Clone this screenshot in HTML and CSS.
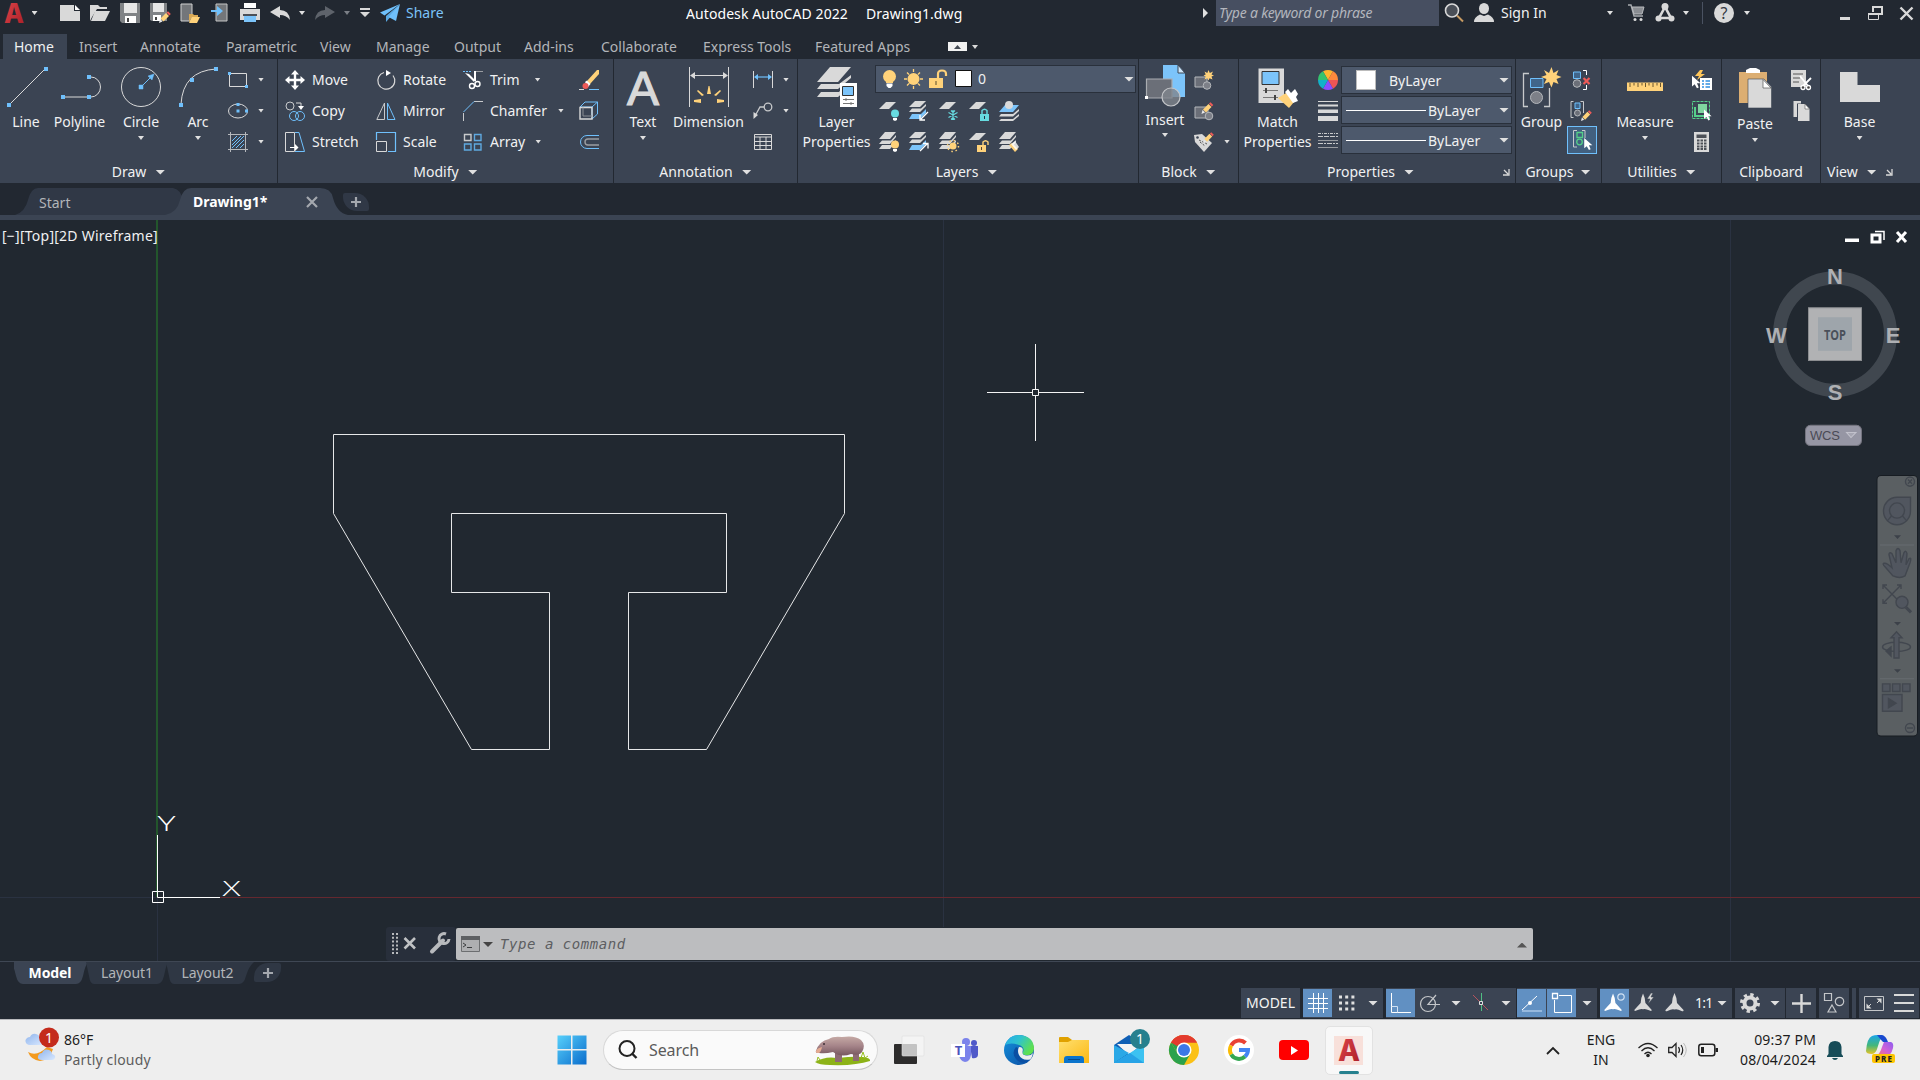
FILE: index.html
```html
<!DOCTYPE html>
<html lang="en">
<head>
<meta charset="utf-8">
<title>Autodesk AutoCAD 2022 - Drawing1.dwg</title>
<link rel="stylesheet" href="styles.css">
</head>
<body>
<svg class="defs" width="0" height="0">
  <defs>
    <symbol id="sheet" viewBox="0 0 20 20"><path d="M7 1H17L10 8H0Z" fill="#d9d9d9"/></symbol>
    <symbol id="stack" viewBox="0 0 20 20"><path d="M6 0H17L11 7H0Z" fill="#d9d9d9"/><path d="M3 8.500H12L17 3V5L11 12H0Z" fill="#d9d9d9"/><path d="M3 13H12L17 8V10L11 17H0Z" fill="#d9d9d9"/></symbol>
    <symbol id="stackb" viewBox="0 0 20 20"><path d="M6 0H17L11 6H0Z" fill="#d9d9d9"/><path d="M3 7.500H12L17 3V5L11 11H0Z" fill="#d9d9d9"/><path d="M3 13H12L17 8V12L11 18H0Z" fill="#7cc4fa"/></symbol>
    <symbol id="pencil" viewBox="0 0 12 12"><path d="M0 12L1 8L3.500 10.500Z" fill="#e8e8e8"/><path d="M1.500 7.500L7 2L10 5L4.500 10.500Z" fill="#ffd27a"/><path d="M7.500 1.500L9 .3L11.800 3L10.300 4.500Z" fill="#ee5b58"/></symbol>
    <symbol id="pointer" viewBox="0 0 10 14"><path d="M0 0V12L3 9.500L5.500 14L7.500 13L5.500 8.500H9.500Z" fill="#fff"/></symbol>
    <symbol id="annot" viewBox="0 0 20 20"><path d="M9.500 0Q12 5 12 10L18.500 17Q19 19 16.500 18Q12 15.500 9.500 16.500Q7 15.500 2.500 18Q0 19 .5 17L7 10Q7 5 9.500 0Z" fill="currentColor"/></symbol>
    <linearGradient id="win" x1="0" y1="0" x2="1" y2="1"><stop offset="0" stop-color="#57d0fb"/><stop offset="1" stop-color="#0a6ccc"/></linearGradient>
    <linearGradient id="red" x1="0" y1="0" x2="1" y2="1"><stop offset="0" stop-color="#e2474b"/><stop offset="1" stop-color="#a81d26"/></linearGradient>
    <linearGradient id="hippo" x1="0" y1="0" x2="0" y2="1"><stop offset="0" stop-color="#c6aaa5"/><stop offset=".5" stop-color="#a58489"/><stop offset="1" stop-color="#76575f"/></linearGradient>
    <linearGradient id="cloud" x1="0" y1="0" x2="1" y2="1"><stop offset="0" stop-color="#8fb4ec"/><stop offset="1" stop-color="#d8e8ff"/></linearGradient>
    <linearGradient id="edge1" x1="0" y1="0" x2="1" y2=".5"><stop offset="0" stop-color="#25a9ec"/><stop offset=".5" stop-color="#2fc3cd"/><stop offset="1" stop-color="#5fe050"/></linearGradient>
    <linearGradient id="edge2" x1="0" y1="0" x2="1" y2="1"><stop offset="0" stop-color="#1492dd"/><stop offset="1" stop-color="#0b4aa0"/></linearGradient>
    <linearGradient id="folder" x1="0" y1="0" x2="1" y2="1"><stop offset="0" stop-color="#ffe070"/><stop offset="1" stop-color="#fbb812"/></linearGradient>
    <linearGradient id="cop1" x1="0" y1="0" x2="0" y2="1"><stop offset="0" stop-color="#1aa5ea"/><stop offset=".55" stop-color="#43b77a"/><stop offset="1" stop-color="#e6c428"/></linearGradient>
    <linearGradient id="cop2" x1="1" y1="0" x2="0" y2="1"><stop offset="0" stop-color="#8c5cf0"/><stop offset=".5" stop-color="#d061d8"/><stop offset="1" stop-color="#fb7a6a"/></linearGradient>
  </defs>
</svg>

<header class="titlebar">
  <div class="qat">
    <svg class="logo" width="28" height="26" viewBox="0 0 28 26"><text x="4" y="22.500" font-family="Inter" font-weight="800" font-size="27" textLength="20" lengthAdjust="spacingAndGlyphs" fill="url(#red)">A</text></svg>
    <span class="cell first"><i class="dn"></i></span>
    <span class="cell"><svg width="20" height="20"><path d="M0 2H14V8H20V18H0Z" fill="#d9d9d9"/><path d="M15 2V7H20Z" fill="#fff"/></svg></span>
    <span class="cell"><svg width="20" height="20"><path d="M0 18V2H8L10 4H17V6H7L2 14Z" fill="#d9d9d9"/><path d="M5 8H20L15 18H1Z" fill="#d9d9d9"/></svg></span>
    <span class="cell"><svg width="20" height="20"><path d="M0 0H20V20H2L0 18Z" fill="#808386"/><path d="M4 0H17V10H4Z" fill="#e6e6e6"/><path d="M5 13H16V20H5Z" fill="#fff"/><path d="M7 15H9V19H7Z" fill="#444"/></svg></span>
    <span class="cell"><svg width="20" height="20"><path d="M0 0H17V18H2L0 17Z" fill="#808386"/><path d="M3 0H14V9H3Z" fill="#e6e6e6"/><path d="M3 12H11V18H3Z" fill="#fff"/><path d="M5 14H7V17H5Z" fill="#444"/><use href="#pencil" x="9" y="8" width="12" height="12"/></svg></span>
    <span class="cell"><svg width="20" height="20"><path d="M1 1H12V18H1Z" fill="#73767a" stroke="#d0d0d0"/><path d="M9 11H13L14 12H18V14H12L9 19Z" fill="#d9a955"/><path d="M12 14H20L17 20H9Z" fill="#ffd27a"/></svg></span>
    <span class="cell"><svg width="20" height="20"><path d="M6 1H17V18H6Z" fill="#73767a" stroke="#c4c4c4"/><path d="M1 7H7V3L13 8L7 13V9H1Z" fill="#6fc0fc"/></svg></span>
    <span class="cell"><svg width="20" height="20"><path d="M4 0H16V5H4Z" fill="#fff"/><path d="M0 6H20V17H0Z" fill="#d9d9d9"/><path d="M3 11H17V13H3Z" fill="#4c5057"/><path d="M4 13H16V19H4Z" fill="#7cc4fa"/></svg></span>
    <span class="cell"><svg width="20" height="20"><path d="M0 9L10 3V7Q19 7 20 17Q16 12 10 12V15Z" fill="#d9d9d9"/></svg></span>
    <span class="cell half"><i class="dn"></i></span>
    <span class="cell"><svg width="20" height="20"><path d="M20 9L10 3V7Q1 7 0 17Q4 12 10 12V15Z" fill="#5e636b"/></svg></span>
    <span class="cell half"><i class="dn dim"></i></span>
    <span class="cell slim"><svg width="10" height="10"><path d="M0 0H10V2H0ZM0 4H10L5 9Z" fill="#d9d9d9"/></svg></span>
    <span class="cell"><svg width="20" height="20"><path d="M20 1L0 9.500L4.500 12.500Z" fill="#6fc0fc"/><path d="M20 1L6 13V19L9.500 15Z" fill="#5aa9e4"/><path d="M20 1L8.500 14L16 18Z" fill="#6fc0fc"/></svg></span>
    <span class="share">Share</span>
  </div>
  <div class="apptitle"><span>Autodesk AutoCAD 2022</span><span>Drawing1.dwg</span></div>
  <div class="search"><svg width="5" height="10"><path d="M0 0L5 5L0 10Z" fill="#e0e0e0"/></svg><span class="kw">Type a keyword or phrase</span></div>
  <div class="account">
    <svg width="20" height="20"><circle cx="7" cy="7.500" r="6.500" fill="#4a4f57" stroke="#d9d9d9" stroke-width="1.600"/><path d="M12 12.500L18 18.500" stroke="#c79a62" stroke-width="2"/></svg>
    <svg class="user" width="20" height="20"><ellipse cx="10" cy="5.500" rx="5" ry="5.500" fill="#d9d9d9"/><path d="M0 19Q0 14 6 11.500L10 13L14 11.500Q20 14 20 19Z" fill="#d9d9d9"/></svg>
    <span class="signin">Sign In</span>
    <i class="dn a1"></i>
    <svg class="cart" width="17" height="18"><path d="M0 1H3L6 12H15" fill="none" stroke="#a9acb0" stroke-width="1.400"/><path d="M4 3H16L14 10H6Z" fill="#8a8d92" stroke="#b9bbbe"/><circle cx="7" cy="15.500" r="1.500" fill="#d9d9d9"/><circle cx="13" cy="15.500" r="1.500" fill="#d9d9d9"/></svg>
    <svg class="tri" width="20" height="20"><path d="M10 4L4 15H16Z" fill="none" stroke="#d9d9d9" stroke-width="2.600"/><circle cx="10" cy="3.500" r="3.500" fill="#d9d9d9"/><circle cx="3.500" cy="15.500" r="3" fill="#d9d9d9"/><circle cx="16.500" cy="15.500" r="3" fill="#d9d9d9"/></svg>
    <i class="dn a2"></i>
    <i class="vsep"></i>
    <span class="help">?</span>
    <i class="dn a3"></i>
  </div>
  <div class="winbtns">
    <svg width="80" height="20"><path d="M0 11H10V14H0Z" fill="#d9d9d9"/><path d="M33 6V1H42V8H38" fill="none" stroke="#d9d9d9" stroke-width="2"/><path d="M28.500 7.500H38.500V13.500H28.500Z" fill="#222831" stroke="#d9d9d9"/><path d="M28 7H39V9H28Z" fill="#d9d9d9"/><path d="M60.500 1.500L72.500 13.500M72.500 1.500L60.500 13.500" stroke="#d9d9d9" stroke-width="2.400"/></svg>
  </div>
</header>

<nav class="tabs">
  <span class="tab on">Home</span><span class="tab t2">Insert</span><span class="tab t3">Annotate</span><span class="tab t4">Parametric</span><span class="tab t5">View</span><span class="tab t6">Manage</span><span class="tab t7">Output</span><span class="tab t8">Add-ins</span><span class="tab t9">Collaborate</span><span class="tab t10">Express Tools</span><span class="tab t11">Featured Apps</span>
  <svg width="30" height="10"><path d="M0 0H19V9H0Z" fill="#f2f2f2"/><path d="M6 7L9.500 3L13 7Z" fill="#444a54"/><path d="M24 3H30L27 7Z" fill="#d9d9d9"/></svg>
</nav>

<main class="ribbon">
  <section class="panel">
    <div class="body draw">
      <div class="big"><svg width="40" height="40"><path d="M2 38L38 2" stroke="#d9d9d9"/><path d="M0 36h4v4h-4zM37 0h4v4h-4z" fill="#6fc0fc"/></svg><span>Line</span></div>
      <div class="big"><svg width="40" height="40"><path d="M2 30H30A9.500 10 0 0 0 30 10" fill="none" stroke="#d9d9d9"/><path d="M0 28h4v4h-4zM26 28h4v4h-4zM26 8h4v4h-4z" fill="#6fc0fc"/></svg><span>Polyline</span></div>
      <div class="big"><svg width="40" height="40"><circle cx="20" cy="20" r="19.500" fill="none" stroke="#d9d9d9"/><path d="M20 20L32 8" stroke="#6fc0fc"/><path d="M18 18h4v4h-4zM33 7L31 13L27 9Z" fill="#6fc0fc" stroke="#6fc0fc" stroke-width=".5"/></svg><span>Circle</span><i class="dn"></i></div>
      <div class="big"><svg width="40" height="40"><path d="M3 37Q5 4 38 2" fill="none" stroke="#d9d9d9"/><path d="M1 36h4v4h-4zM12 11h4v4h-4zM36 0h4v4h-4z" fill="#6fc0fc"/></svg><span>Arc</span><i class="dn"></i></div>
      <div class="col">
        <div><svg width="20" height="20"><path d="M1.500 3.500H18.500V16.500H1.500Z" fill="none" stroke="#d9d9d9"/><path d="M0 2h3v3h-3zM17 15h3v3h-3z" fill="#6fc0fc"/></svg><i class="dn"></i></div>
        <div><svg width="20" height="20"><ellipse cx="10" cy="10" rx="9.500" ry="7" fill="none" stroke="#d9d9d9"/><path d="M8.500 8.500h3v3h-3zM8.500 2h3v3h-3zM17 8.500h3v3h-3z" fill="#6fc0fc"/></svg><i class="dn"></i></div>
        <div><svg width="20" height="20"><path d="M2.500 0V20M17.500 0V20M0 2.500H20M0 17.500H20" stroke="#b5b8bc"/><path d="M4 9L9 4M4 13L13 4M4 16L16 4M8 16L16 8M12 16L16 12" stroke="#6fc0fc"/></svg><i class="dn"></i></div>
      </div>
    </div>
    <div class="ptitle">Draw<i class="dnb"></i></div>
  </section>

  <section class="panel">
    <div class="body modify">
      <div class="col">
        <div><svg width="20" height="20"><path d="M10 0L14 4.500H11.200V8.800H15.500V6L20 10L15.500 14V11.200H11.200V15.500H14L10 20L6 15.500H8.800V11.200H4.500V14L0 10L4.500 6V8.800H8.800V4.500H6Z" fill="#fff"/></svg>Move</div>
        <div><svg width="20" height="20"><circle cx="5" cy="5" r="4" fill="none" stroke="#c8cacc"/><path d="M11 2H16V6" fill="none" stroke="#d9d9d9"/><path d="M13 5H19L16 9Z" fill="#fff"/><circle cx="9" cy="15" r="4.500" fill="none" stroke="#6fc0fc"/><circle cx="15" cy="15" r="4.500" fill="none" stroke="#6fc0fc"/></svg>Copy</div>
        <div><svg width="20" height="20"><path d="M.5.500H9.500V19.500H.5Z" fill="none" stroke="#d9d9d9"/><path d="M10 .5H14L19.500 19.500H10" fill="none" stroke="#6fc0fc"/><path d="M5 15.500H12" stroke="#fff"/><path d="M10 12L13.500 15.500L10 19Z" fill="#fff"/></svg>Stretch</div>
      </div>
      <div class="col">
        <div><svg width="20" height="20"><path d="M8 2.500A8.500 8.500 0 1 0 17 5.500" fill="none" stroke="#d9d9d9" stroke-width="1.200"/><path d="M10 0L15 3L10 6Z" fill="#fff"/></svg>Rotate</div>
        <div><svg width="20" height="20"><path d="M8.500 2V18.500H.8Z" fill="none" stroke="#c8cacc"/><path d="M11.500 2V18.500H19Z" fill="none" stroke="#6fc0fc"/></svg>Mirror</div>
        <div><svg width="20" height="20"><path d="M.5 8V.5H19.500V19.500H12" fill="none" stroke="#6fc0fc" stroke-width="1.200"/><path d="M.5 9.500H10.500V19.500H.5Z" fill="none" stroke="#d9d9d9"/></svg>Scale</div>
      </div>
      <div class="col">
        <div><svg width="20" height="20"><path d="M0 1.500H9" stroke="#6fc0fc" stroke-dasharray="2 1"/><path d="M12 1.500H20" stroke="#9a9da2"/><path d="M2 3L11 12L12 10L6 4ZM11 1V11L13 11V1Z" fill="#fff"/><circle cx="9" cy="16" r="2.500" fill="none" stroke="#fff" stroke-width="1.400"/><circle cx="14.500" cy="14" r="2.500" fill="none" stroke="#fff" stroke-width="1.400"/></svg>Trim<i class="dn m1"></i></div>
        <div><svg width="20" height="20"><path d="M.5 20V12M11 .5H20" stroke="#c8cacc"/><path d="M.5 11L11 .5" stroke="#6fc0fc"/></svg>Chamfer<i class="dn m2"></i></div>
        <div><svg width="20" height="20"><path d="M1.500 2.500H8V8.500H1.500Z" fill="none" stroke="#c8cacc" stroke-width="1.400"/><path d="M11.500 2.500H18V8.500H11.500ZM1.500 12H8V18H1.500ZM11.500 12H18V18H11.500Z" fill="none" stroke="#5fa9e0" stroke-width="1.400"/></svg>Array<i class="dn m3"></i></div>
      </div>
      <div class="col">
        <div><svg width="20" height="20"><path d="M8 11L18 0H20V4L11 14Z" fill="#ffd27a"/><path d="M6 12L8 10.500L11.500 14L9 17Z" fill="#fff"/><circle cx="6.500" cy="16" r="3" fill="#ee5b58"/><path d="M0 19.500H5" stroke="#d9d9d9"/><path d="M10 19.500H20" stroke="#6fc0fc"/></svg></div>
        <div><svg width="20" height="20"><path d="M1 6L6 1H18.500L13 6ZM18.500 1V13L13 18V6" fill="none" stroke="#6fc0fc"/><path d="M1 6.500H13V18H1Z" fill="none" stroke="#d9d9d9" stroke-width="1.400"/><path d="M4 6.500V15H13" fill="none" stroke="#8b8e94"/></svg></div>
        <div><svg width="20" height="20"><path d="M20 3.500H8A6.500 6.500 0 0 0 8 16.500H20" fill="none" stroke="#6fc0fc"/><path d="M20 7H9A3 3 0 0 0 9 13H20" fill="none" stroke="#9a9da2" stroke-width="1.400"/></svg></div>
      </div>
    </div>
    <div class="ptitle">Modify<i class="dnb"></i></div>
  </section>

  <section class="panel">
    <div class="body annotation">
      <div class="big"><svg width="40" height="40"><text x="4" y="37.500" font-family="Liberation Sans" font-size="48" stroke="#d9d9d9" stroke-width="1.200" textLength="32" lengthAdjust="spacingAndGlyphs" fill="#d9d9d9">A</text></svg><span>Text</span><i class="dn"></i></div>
      <div class="big"><svg width="40" height="40"><path d="M.5 0V40M39.500 0V40M2 8.500H38" stroke="#d9d9d9"/><path d="M1 8.500L6 5V12ZM39 8.500L34 5V12Z" fill="#d9d9d9"/><path d="M18 27L19.500 19H20.500L22 27ZM13 29L8 24L9 23L15 28ZM27 29L32 24L31 23L25 28ZM12 36L5 35V33L12 32ZM28 36L35 35V33L28 32Z" fill="#ffd27a"/></svg><span>Dimension</span></div>
      <div class="col">
        <div><svg width="20" height="20"><path d="M.5 1V18M19.500 1V18" stroke="#d9d9d9"/><path d="M2 7H18" stroke="#6fc0fc" stroke-width="1.200"/><path d="M1 7L5 4V10ZM19 7L15 4V10Z" fill="#6fc0fc"/></svg><i class="dn"></i></div>
        <div><svg width="20" height="20"><circle cx="15" cy="6" r="3.800" fill="none" stroke="#c8cacc" stroke-width="1.300"/><path d="M11 6H7L2 15" fill="none" stroke="#c8cacc" stroke-width="1.300"/><path d="M.5 18V11L5 14Z" fill="#d9d9d9"/></svg><i class="dn"></i></div>
        <div><svg width="20" height="20"><path d="M1.500 2.500H18.500V17.500H1.500ZM1.500 5H18.500M1.500 9.500H18.500M1.500 13.500H18.500M7 5V17.500M13 5V17.500" fill="none" stroke="#d9d9d9"/></svg></div>
      </div>
    </div>
    <div class="ptitle">Annotation<i class="dnb"></i></div>
  </section>

  <section class="panel">
    <div class="body layers">
      <div class="big"><svg width="40" height="40"><path d="M13 0H34L21 15H0Z" fill="#d9d9d9"/><path d="M4 17H22L34 8V11L21 22H0ZM4 25H22L28 18V24L21 30H0Z" fill="#d9d9d9"/><path d="M23 16H40V40H23Z" fill="#fff"/><path d="M25.500 19.500H36.500V28.500H25.500Z" fill="#7cc4fa" stroke="#333"/><path d="M26 32.500H37M26 36.500H37M29 31V34M34 35V38" stroke="#777"/></svg><span>Layer<br>Properties</span></div>
      <div class="lstack">
        <div class="combo lcombo">
          <svg width="100" height="26"><circle cx="13.500" cy="10.500" r="6.500" fill="#ffd27a"/><path d="M10 15H17V17H10Z" fill="#ffd27a"/><path d="M10.500 17.500H16.500V20L14.500 22H12.500L10.500 20Z" fill="#fff"/><circle cx="37.500" cy="13" r="6" fill="#ffd27a"/><path d="M37.500 3V6M37.500 20V23M28 13H31M44 13H47M31 6.500L33 8.500M44 6.500L42 8.500M31 19.500L33 17.500M44 19.500L42 17.500" stroke="#ffd27a" stroke-width="1.300"/><path d="M53 12H67V22H53Z" fill="#ffd27a"/><path d="M62 12V8Q62 4.500 66 4.500Q70 4.500 70 8V10" fill="none" stroke="#ffd27a" stroke-width="2.200"/><path d="M60 15V19" stroke="#5b4c2a"/><path d="M79.500 4.500H95.500V20.500H79.500Z" fill="#fff" stroke="#111"/></svg>
          <span>0</span><i class="dnb"></i>
        </div>
        <div class="irow">
          <svg width="20" height="20"><use href="#sheet" width="20" height="20"/><circle cx="16" cy="12.500" r="4" fill="#67dbe0"/><path d="M14 17H18V19L16 20L14 19Z" fill="#fff"/></svg>
          <svg width="20" height="20"><use href="#stackb" width="20" height="20"/><path d="M19 11L12 18M11 14V19H16" stroke="#fff" fill="none" stroke-width="1.300"/></svg>
          <svg width="20" height="20"><use href="#sheet" width="20" height="20"/><path d="M14 9V19M9.500 11.500L18.500 16.500M18.500 11.500L9.500 16.500M12 9.500L14 11.500L16 9.500M12 18.500L14 16.500L16 18.500" fill="none" stroke="#67dbe0" stroke-width="1.200"/></svg>
          <svg width="20" height="20"><use href="#sheet" width="20" height="20"/><path d="M11 13H20V20H11Z" fill="#67dbe0"/><path d="M13 13V9.500Q15.500 7 18 9.500V13" fill="none" stroke="#67dbe0" stroke-width="1.400"/><path d="M15.500 15V18" stroke="#234"/></svg>
          <svg width="20" height="20"><path d="M6 4H20L14 11H0Z" fill="#7cc4fa"/><circle cx="10" cy="4" r="4" fill="#d9d9d9"/><path d="M2 13H14L20 8V10L14 15.500H0ZM2 18H14L20 13V15L14 20H0Z" fill="#d9d9d9"/></svg>
        </div>
        <div class="irow">
          <svg width="20" height="20"><use href="#stack" width="20" height="20"/><circle cx="16" cy="12.500" r="4" fill="#ffd27a"/><path d="M14 17H18V19L16 20L14 19Z" fill="#fff"/></svg>
          <svg width="20" height="20"><use href="#stackb" width="20" height="20"/><path d="M11 19L18 12M14 11.500H19V16.500" stroke="#fff" fill="none" stroke-width="1.300"/></svg>
          <svg width="20" height="20"><use href="#stack" width="20" height="20"/><circle cx="14" cy="14" r="3.500" fill="#ffd27a"/><circle cx="14" cy="14" r="5.500" fill="none" stroke="#ffd27a" stroke-width="1.500" stroke-dasharray="1.500 2.800"/></svg>
          <svg width="20" height="20"><use href="#sheet" width="20" height="20"/><path d="M8 13H17V20H8Z" fill="#ffd27a"/><path d="M14 13V10Q16.500 7.500 19 10V13" fill="none" stroke="#ffd27a" stroke-width="1.400"/><path d="M12.500 15V18" stroke="#543"/></svg>
          <svg width="20" height="20"><use href="#stack" width="20" height="20"/><path d="M10 13L13 11L19 17L16 20Z" fill="#ffd27a"/><path d="M12 12L16 9L20 15L17 18Z" fill="#fff" opacity=".8"/></svg>
        </div>
      </div>
    </div>
    <div class="ptitle lt">Layers<i class="dnb"></i></div>
  </section>

  <section class="panel">
    <div class="body block">
      <div class="big up"><svg width="40" height="42"><path d="M18 0H33L40 8V32H18Z" fill="#7cc4fa"/><path d="M33 0V8H40Z" fill="#cfe7fa" stroke="#3b4453"/><path d="M1.500 14H27V33H1.500Z" fill="#6b6f78" stroke="#a9acb1" stroke-width="1.200"/><circle cx="26" cy="32" r="9" fill="#80848c" fill-opacity=".8" stroke="#c4c6c9" stroke-width="1.200"/><path d="M0 31h3v3h-3z" fill="#fff"/></svg><span>Insert</span><i class="dn"></i></div>
      <div class="col">
        <div><svg width="20" height="20"><path d="M1 7H13V17H1Z" fill="#6b6f78" stroke="#b5b8bc"/><circle cx="13" cy="15.500" r="3.800" fill="#7d8088" stroke="#b5b8bc"/><path d="M14.500 0L15.800 3L19 1.500L17.500 4.500L20 5.500L17.500 6.500L18.500 9.500L15.500 8.200L14.500 10.500L13.300 8.200L10.500 9.500L11.700 6.500L9.500 5.500L11.700 4.500L10.500 1.500L13.300 3Z" fill="#ffd27a"/></svg></div>
        <div><svg width="20" height="20"><path d="M1 6H14V17H1Z" fill="#6b6f78" stroke="#b5b8bc"/><circle cx="15" cy="15" r="3.800" fill="#7d8088" stroke="#b5b8bc"/><use href="#pencil" x="7" y="1" width="13" height="12"/></svg></div>
        <div><svg width="20" height="20"><path d="M0 3L8 2L18 11L10 20L1 10Z" fill="#d9d9d9"/><circle cx="3.500" cy="5.500" r="1.300" fill="#3b4453"/><path d="M6 10L11 14M5 8L13 12" stroke="#555" stroke-dasharray="2 1.500"/><use href="#pencil" x="9" y="0" width="11" height="11"/></svg><i class="dn"></i></div>
      </div>
    </div>
    <div class="ptitle">Block<i class="dnb"></i></div>
  </section>

  <section class="panel">
    <div class="body props">
      <div class="big"><svg width="40" height="42"><path d="M.5 1.500H26V36H.5Z" fill="#d9d9d9"/><path d="M4 4.500H21V17.500H4Z" fill="#7cc4fa" stroke="#333"/><path d="M5 23.500H20M5 30.500H20" stroke="#777"/><path d="M8 21V26M17 28V33" stroke="#444" stroke-width="2"/><path d="M20 31L28 26L36 35L31 41Z" fill="#ffd27a"/><path d="M27 25L30 22L33 26L37 22L40 27L38 30L40 34L35 36Z" fill="#fff"/></svg><span>Match<br>Properties</span></div>
      <div class="col">
        <div><svg width="20" height="20"><g transform="translate(10 10)"><path d="M0 0L-5 -8.660A10 10 0 0 1 5 -8.660Z" fill="#ffb52e"/><path d="M0 0L5 -8.660A10 10 0 0 1 10 0Z" fill="#ff8a3c"/><path d="M0 0H10A10 10 0 0 1 5 8.660Z" fill="#ee5555"/><path d="M0 0L5 8.660A10 10 0 0 1 -5 8.660Z" fill="#8a4dff"/><path d="M0 0L-5 8.660A10 10 0 0 1 -10 0Z" fill="#12b1c9"/><path d="M0 0H-10A10 10 0 0 1 -5 -8.660Z" fill="#35c36e"/></g></svg></div>
        <div><svg width="20" height="20"><path d="M0 0H20V1H0ZM0 3.500H20V5.500H0ZM0 8.500H20V12H0ZM0 15H20V20H0Z" fill="#d9d9d9"/></svg></div>
        <div><svg width="20" height="20"><path d="M0 1.500H20" stroke="#c8cacc" stroke-dasharray="3 1 1 1"/><path d="M0 4.500H20" stroke="#c8cacc" stroke-dasharray="5 1"/><path d="M0 8.500H20M0 15.500H20" stroke="#9a9da2"/><path d="M0 11.500H20" stroke="#c8cacc" stroke-dasharray="5 1 2 1"/></svg></div>
      </div>
      <div class="combos">
        <div class="combo"><i class="swatch"></i><span>ByLayer</span><i class="dnb"></i></div>
        <div class="combo"><i class="ln"></i><span>ByLayer</span><i class="dnb"></i></div>
        <div class="combo"><i class="ln"></i><span>ByLayer</span><i class="dnb"></i></div>
      </div>
    </div>
    <div class="ptitle pt">Properties<i class="dnb"></i><svg class="launch" width="7" height="7"><path d="M1 1L5 5M6 0V6H0" fill="none" stroke="#d9d9d9" stroke-width="1.300"/></svg></div>
  </section>

  <section class="panel">
    <div class="body groups">
      <div class="big"><svg width="40" height="42"><path d="M7 6.500H1.500V39.500H6M22 39.500H27.500V21" fill="none" stroke="#c8cacc" stroke-width="1.300"/><path d="M8.500 11.500H21V20.500H8.500Z" fill="#40658a" stroke="#6fc0fc"/><circle cx="14.500" cy="30.500" r="6" fill="#7d8088" stroke="#b5b8bc"/><path d="M29.500 0L31.500 6L36.500 3L34.500 8L39.500 10L34.500 12L36.500 17L31.500 15L29.500 20.500L27 15L22 17L24.500 12L19 10L24.500 8L22 3L27 6Z" fill="#ffd27a"/></svg><span>Group</span></div>
      <div class="col">
        <div><svg width="20" height="20"><path d="M1.500 2H8.500V8.500H1.500Z" fill="#40658a" stroke="#6fc0fc"/><circle cx="5" cy="13.500" r="3.800" fill="#6b6f78" stroke="#b5b8bc"/><path d="M11 .5H14.500V5M14.500 15V19.500H11" fill="none" stroke="#fff"/><path d="M11.500 8L17.500 14M17.500 8L11.500 14" stroke="#ee5b58" stroke-width="2.200"/></svg></div>
        <div><svg width="20" height="20"><path d="M2 .5H-.5V16.500H2M9 .5H12V12" fill="none" stroke="#c8cacc" transform="translate(-.5 0)"/><path d="M3 2H8V7.500H3Z" fill="#40658a" stroke="#6fc0fc"/><circle cx="5.500" cy="12" r="3" fill="#6b6f78" stroke="#b5b8bc"/><use href="#pencil" x="9" y="9" width="11" height="11"/></svg></div>
        <div class="hl"><svg width="20" height="20"><path d="M4 .5H.5V17H4M9 .5H12V8" fill="none" stroke="#c8cacc"/><path d="M4 2.500H9.500V7.500H4Z" fill="none" stroke="#55d08a" stroke-width="1.300"/><circle cx="6.500" cy="12" r="2.800" fill="none" stroke="#55d08a" stroke-width="1.300"/><use href="#pointer" x="11" y="8" width="9" height="12"/></svg></div>
      </div>
    </div>
    <div class="ptitle gt">Groups<i class="dnb"></i></div>
  </section>

  <section class="panel">
    <div class="body utils">
      <div class="big"><svg width="40" height="40"><path d="M2 15.500H38V24H2Z" fill="#ffd27a"/><path d="M5 16V20M9 16V18.500M13 16V20M17 16V18.500M20.500 16V20M24 16V18.500M28 16V20M32 16V18.500M35.500 16V20" stroke="#6a5730"/></svg><span>Measure</span><i class="dn"></i></div>
      <div class="col">
        <div><svg width="20" height="20"><path d="M8 0L3 6H7L5 10L13 4H9L11 0Z" fill="#ffc65a"/><use href="#pointer" x="0" y="5" width="9" height="14"/><path d="M8 8H20V20H8Z" fill="#fff"/><path d="M10 11H12M13.500 11H18M10 14H12M13.500 14H18M10 17H12M13.500 17H18" stroke="#2f8fe0" stroke-width="1.300"/></svg></div>
        <div><svg width="20" height="20"><path d="M.5 .5H17.500V17.500H.5Z" fill="none" stroke="#55d08a" stroke-dasharray="3 1"/><path d="M6 3H15V12H6Z" fill="#7fd6a0"/><path d="M3 6V15H12" fill="none" stroke="#55d08a" stroke-width="2"/><use href="#pointer" x="12" y="8" width="8" height="12"/></svg></div>
        <div><svg width="20" height="20"><path d="M2 0H17V20H2Z" fill="#d9d9d9"/><path d="M4.500 2.500H14.500V6H4.500Z" fill="#4c5057"/><path d="M5 8.500H15M5 11.500H15M5 14.500H15M5 17H15" stroke="#4c5057" stroke-width="2" stroke-dasharray="2.500 1"/></svg></div>
      </div>
    </div>
    <div class="ptitle">Utilities<i class="dnb"></i></div>
  </section>

  <section class="panel">
    <div class="body clip">
      <div class="big low"><svg width="34" height="41"><path d="M1 5H29V36H1Z" fill="#dcae72"/><path d="M8 6V3L12 1H18L22 3V6Z" fill="#fff"/><path d="M10 12H26L33.500 20V41H10Z" fill="#d9d9d9" stroke="#3b4453" stroke-width=".6"/><path d="M25 12.500V21H33Z" fill="#fff" stroke="#555" stroke-width=".7"/></svg><span>Paste</span><i class="dn"></i></div>
      <div class="col">
        <div><svg width="20" height="20"><path d="M0 0H15V17H0Z" fill="#d9d9d9"/><path d="M2 4H12M2 8H9M2 12H8" stroke="#555"/><path d="M9 6L17 16M20 8L12 16" stroke="#fff" stroke-width="1.800"/><circle cx="12" cy="17.500" r="2" fill="#444" stroke="#fff" stroke-width="1.300"/><circle cx="17.500" cy="17.500" r="2" fill="#444" stroke="#fff" stroke-width="1.300"/></svg></div>
        <div><svg width="20" height="20"><path d="M2.500 0H10V2.500H6V16H2.500Z" fill="#d9d9d9"/><path d="M7 3H14L18.500 8V20H7Z" fill="#d9d9d9"/><path d="M14 3V8H18.500Z" fill="#fff" stroke="#555" stroke-width=".6"/></svg></div>
      </div>
    </div>
    <div class="ptitle">Clipboard</div>
  </section>

  <section class="panel">
    <div class="body view">
      <div class="big"><svg width="40" height="40"><path d="M0 5H17.500V18H40V35H0Z" fill="#d9d9d9"/></svg><span>Base</span><i class="dn"></i></div>
    </div>
    <div class="ptitle vt">View<i class="dnb"></i><svg class="launch" width="7" height="7"><path d="M1 1L5 5M6 0V6H0" fill="none" stroke="#d9d9d9" stroke-width="1.300"/></svg></div>
  </section>
</main>

<div class="doctabs">
  <div class="dtab start">Start</div>
  <div class="dtab current">Drawing1*<svg width="12" height="12"><path d="M1 1L11 11M11 1L1 11" stroke="#a4a8ae" stroke-width="2.200"/></svg></div>
  <div class="dplus"><svg width="10" height="10"><path d="M5 0V10M0 5H10" stroke="#a4a8ae" stroke-width="2.200"/></svg></div>
</div>

<div class="canvas">
  <svg class="drawing" width="1920" height="741" viewBox="0 220 1920 741">
    <path d="M943.500 220V927M1730.500 220V961M157.500 898V961M0 897.500H157" stroke="#2a3241"/>
    <path d="M157 220V897" stroke="#23562c" stroke-width="2"/>
    <path d="M157 897.500H1920" stroke="#65282f"/>
    <path d="M333.500 434.500H844.500V513.500L706.500 749.500H628.500V592.500H726.500V513.500H451.500V592.500H549.500V749.500H471.500L333.500 513.500Z" fill="none" stroke="#e6e7e8"/>
    <path d="M1035.500 344V389M1035.500 396V441M987 392.500H1032M1039 392.500H1084M1032.500 389.500H1038.500V395.500H1032.500Z" fill="none" stroke="#f4f4f4"/>
    <path d="M157.500 835V897.500H220M152.500 891.500H163.500V902.500H152.500Z" fill="none" stroke="#fff"/>
    <g class="ucs"><text x="157.500" y="831" textLength="18" lengthAdjust="spacingAndGlyphs">Y</text><text x="222.500" y="896" textLength="18" lengthAdjust="spacingAndGlyphs">X</text></g>
    <path d="M1845 238.500H1859V242H1845Z" fill="#fff"/>
    <path d="M1875 231.500H1884V240" fill="none" stroke="#fff" stroke-width="1.500"/><path d="M1872 235H1880V242H1872Z" fill="none" stroke="#fff" stroke-width="3"/>
    <path d="M1897 232L1906 242M1906 232L1897 242" stroke="#fff" stroke-width="3"/>
    <g transform="translate(0 -3.080) scale(1 1.014)">
    <circle cx="1835" cy="332.500" r="55.500" fill="none" stroke="#40474f" stroke-width="13"/>
    <g class="compass"><text x="1835" y="283">N</text><text x="1835" y="398">S</text><text x="1776.500" y="341">W</text><text x="1893" y="341">E</text></g>
    <path d="M1808.500 306.500H1861.500V358.500H1808.500Z" fill="#b1b2b4" stroke="#8b8d90"/><path d="M1818 316H1852V349H1818Z" fill="#9ea5ab"/>
    <text class="top" x="1835" y="338" textLength="22" lengthAdjust="spacingAndGlyphs">TOP</text>
    <rect x="1805.500" y="422.500" width="56" height="20" rx="5" fill="#9696a4" stroke="#74747f"/>
    <text class="wcs" x="1810" y="437" textLength="30" lengthAdjust="spacing">WCS</text><path d="M1846.500 429.500H1856L1851 434.500Z" fill="#a6a6b2" stroke="#c2c2cc"/>
    <rect x="1877" y="472" width="40.500" height="257" rx="4" fill="#5a5f62" stroke="#171c22"/>
    <path d="M1880 540.500H1914M1880 672.500H1914" stroke="#676c70"/>
    <g fill="none" stroke="#42474f" stroke-width="1.400">
      <circle cx="1910" cy="478" r="4.500"/><path d="M1908 476L1912 480M1912 476L1908 480"/>
      <path d="M1897 493.500H1910.500V507A13.500 13.500 0 1 1 1897 493.500Z" fill="#51565f"/><circle cx="1897" cy="506.500" r="7.500"/><path d="M1891.500 512L1888 516M1902.500 512L1906 516"/>
      <path d="M1893 571L1885 562Q1882 559 1884 558.500Q1887 558 1892 563L1889 550Q1889 547 1892 549L1896 558V546Q1898 542 1900 546L1901 558L1904 548Q1906 545 1907 549L1906 560L1909 554Q1912 552 1910 558L1905 571Q1900 574 1893 571Z" fill="#51565f"/>
      <path d="M1883 580L1901 598M1901 580L1883 598M1883 584V580H1887M1897 580H1901V584M1883 594V598H1887"/><circle cx="1902" cy="597" r="6" fill="#51565f"/><path d="M1906 602L1911 607" stroke-width="3"/>
      <ellipse cx="1896.500" cy="641" rx="14" ry="4.500"/><path d="M1894 652V632H1891L1896.500 626L1902 632H1899V652Z" fill="#51565f"/><path d="M1886 645L1891 641V650Z" fill="#42474f"/>
      <path d="M1882.500 677.500H1890V685H1882.500ZM1892.500 677.500H1900V685H1892.500ZM1902.500 677.500H1910V685H1902.500ZM1882.500 688H1902V704.500H1882.500Z" fill="#51565f"/><path d="M1888.500 692V701L1896 696.500Z" fill="#42474f"/>
      <circle cx="1910" cy="721" r="4.500"/><path d="M1907 721H1913"/>
    </g>
    <path d="M1894 531H1901L1897.500 534.500ZM1894 616.500H1901L1897.500 620ZM1894 663H1901L1897.500 666.500Z" fill="#3c4149"/>
    </g>
  </svg>
  <div class="viewlabel">[−][Top][2D Wireframe]</div>
  <div class="cmd">
    <div class="cmdtools"><svg width="70" height="33"><path d="M7 6V27M11 6V27" stroke="#b8babd" stroke-width="2" stroke-dasharray="2 1.800"/><path d="M18.500 11L29 21.500M29 11L18.500 21.500" stroke="#c0c2c4" stroke-width="2.600"/><path d="M46 24.500L57 13.500" stroke="#b8babd" stroke-width="4" stroke-linecap="round"/><path d="M60 7A5 5 0 1 0 63 12" fill="none" stroke="#b8babd" stroke-width="3"/></svg></div>
    <div class="cmdline"><svg width="40" height="32"><path d="M5.500 8.500H23.500V23.500H5.500Z" fill="#aeafb1" stroke="#6c6e70"/><path d="M5 8H24V12H5Z" fill="#5e6063"/><path d="M7 15L10 17L7 19M11 19.500H16" fill="none" stroke="#3c3e40"/><path d="M27 14H37L32 19Z" fill="#444"/></svg><span>Type a command</span><i class="up"></i></div>
  </div>
</div>

<div class="layouts">
  <span class="ltab m">Model</span><span class="ltab l1">Layout1</span><span class="ltab l2">Layout2</span><span class="lplus"><svg width="10" height="10"><path d="M5 0V10M0 5H10" stroke="#a4a8ae" stroke-width="2.200"/></svg></span>
</div>

<div class="status">
  <div class="sg model">MODEL</div>
  <div class="sg g2"><b class="on"><svg width="20" height="20"><path d="M5.500 0V20M10.500 0V20M15.500 0V20M0 5.500H20M0 10.500H20M0 15.500H20" stroke="#fff"/></svg></b><b><svg width="16" height="16"><path d="M0 2H16M0 8H16M0 14H16" stroke="#e0e0e0" stroke-width="3" stroke-dasharray="3 3.200"/></svg></b><i class="dnb"></i></div>
  <div class="sg g3"><b class="on"><svg width="20" height="20"><path d="M.5 0V19.500H20" fill="none" stroke="#fff"/><path d="M.5 13.500H6.500V19.500" fill="none" stroke="#cfe0f2"/></svg></b><b><svg width="22" height="20"><circle cx="9" cy="11" r="7.500" fill="none" stroke="#c4c6c9" stroke-width="1.200"/><path d="M21 11.500H9L17 2" fill="none" stroke="#c4c6c9" stroke-width="1.200"/></svg></b><i class="dnb"></i><b class="iso"><svg width="20" height="20"><path d="M2 2L17 17" stroke="#b5525c"/><path d="M10.500 0V18" stroke="#4fbf82"/><path d="M8.500 8.500H11.500V11.500H8.500Z" fill="#3b4453" stroke="#e0e0e0"/></svg></b><i class="dnb"></i></div>
  <div class="sg g4"><b class="on"><svg width="22" height="20"><path d="M1 17L16 3" stroke="#fff"/><path d="M1 18H21" stroke="#a9c6e6" stroke-width="1.500"/><circle cx="9" cy="10" r="2" fill="#fff"/></svg></b><b class="on n2"><svg width="20" height="20"><path d="M7 2.500H19.500V19.500H2.500V7" fill="none" stroke="#fff"/><path d="M.5.500H5.500V5.500H.5Z" fill="none" stroke="#fff" stroke-width="1.300"/></svg></b><i class="dnb"></i></div>
  <div class="sg g5"><b class="on w"><svg width="20" height="20"><use href="#annot" width="19" height="20" x="-1"/><circle cx="16" cy="4" r="3.200" fill="none" stroke="#cfe0f2" stroke-width="1.200"/></svg></b><b><svg width="20" height="20"><use href="#annot" width="19" height="20" x="-1"/><path d="M16 0L12 6H15L13 11L19 4H16L18 0Z" fill="#d9d9d9" stroke="#3b4453" stroke-width=".6"/></svg></b><b><svg width="20" height="20"><use href="#annot" width="20" height="20"/></svg></b><span>1:1</span><i class="dnb"></i></div>
  <div class="sg g6"><b><svg width="20" height="20"><circle cx="10" cy="10" r="8.200" fill="none" stroke="#d9d9d9" stroke-width="3.600" stroke-dasharray="3.200 3.240"/><circle cx="10" cy="10" r="5.500" fill="none" stroke="#d9d9d9" stroke-width="4"/></svg></b><i class="dnb"></i></div>
  <div class="sg g7"><svg width="19" height="19"><path d="M9.500 0V19M0 9.500H19" stroke="#d9d9d9" stroke-width="2.400"/></svg></div>
  <div class="sg g8"><svg width="20" height="20"><path d="M.5.500H7.500V7.500H.5ZM8 12L12 19H4Z" fill="none" stroke="#c4c6c9" stroke-width="1.200"/><circle cx="15.500" cy="8.500" r="4.200" fill="none" stroke="#c4c6c9" stroke-width="1.200"/></svg></div>
  <div class="sg g9"></div>
  <div class="sg g10"><svg width="20" height="15"><path d="M.5.500H19.500V14.500H.5Z" fill="none" stroke="#c4c6c9"/><path d="M12.500 2.500H17.500V7.500ZM2.500 7.500V12.500H7.500Z" fill="#d9d9d9"/><path d="M17 3L13 7M3 12L7 8" stroke="#d9d9d9"/></svg><svg width="20" height="18"><path d="M0 1H20M0 9H20M0 17H20" stroke="#d9d9d9" stroke-width="2"/></svg></div>
</div>

<footer class="taskbar">
  <div class="weather">
    <svg width="36" height="36"><path d="M4 18Q0 17 .5 13Q2 10 5 10Q7 6 11 7Q15 8 15 12L18 18Z" fill="url(#cloud)"/><path d="M22 20Q12 30 3 25Q6 33 15 34Q25 33 28 22Z" fill="#f39a1e"/><path d="M17 33Q12 33 13 29Q14 26 17 26Q19 21 24 23Q27 24 27 27Q31 28 30 31Q29 33 27 33Z" fill="url(#cloud)"/><circle cx="24" cy="10.500" r="10" fill="#c42b1c"/><text x="24" y="15.500" text-anchor="middle" font-family="Noto Sans" font-size="14" fill="#fff">1</text></svg>
    <div><p>86°F</p><p class="grey">Partly cloudy</p></div>
  </div>
  <div class="apps">
    <svg class="start" width="30" height="30"><path d="M.5.500H14V14H.5ZM15.500.500H29.500V14H15.500ZM.5 15.500H14V29.500H.5ZM15.500 15.500H29.500V29.500H15.500Z" fill="url(#win)"/></svg>
    <div class="tsearch">
      <svg width="20" height="20"><circle cx="9" cy="8.500" r="7.500" fill="none" stroke="#222" stroke-width="2"/><path d="M14 13.500L18.500 18" stroke="#222" stroke-width="2.400"/></svg><span>Search</span>
      <svg class="hippo" width="56" height="32"><path d="M0 27Q10 21 22 23Q40 21 48 22Q56 23 55 26Q40 31 15 30Q4 30 0 27Z" fill="#8db318"/><path d="M2 26L3 22L5 25M46 23L48 17L50 23L53 21" stroke="#9ac024" fill="none"/><path d="M20 16H27V27H20ZM38 15H44V26H38Z" fill="#8d6b74"/><path d="M1 16Q4 6 14 4Q18 1 27 2Q40 0 46 5Q51 10 47 17Q44 21 36 19Q26 23 18 17Q10 19 4 18Q0 18 1 16Z" fill="url(#hippo)"/><path d="M1 16Q2 13 7 12Q6 17 4 18Q0 18 1 16Z" fill="#e5ab92"/><circle cx="9" cy="9" r="1" fill="#3e2e36"/></svg>
    </div>
    <svg class="tv" width="32" height="32"><rect x="1" y="10" width="23" height="20" rx="1" fill="#2d2c2c"/><rect x="9" y="2" width="22" height="20" rx="1" fill="#f5f5f5" fill-opacity=".75" stroke="#ddd" stroke-width=".6"/></svg>
    <svg class="teams" width="28" height="26"><circle cx="15" cy="5" r="4" fill="#7b83eb"/><circle cx="23" cy="6" r="3" fill="#5059c9"/><path d="M19 9H27V18Q26 22 21 21Z" fill="#5059c9"/><path d="M8 9H20V18Q19 25 14 25Q9 24 8 18Z" fill="#7b83eb"/><path d="M0 7H14V20H0Z" fill="#fff"/><text x="7.500" y="18" text-anchor="middle" font-family="Open Sans" font-weight="700" font-size="13" fill="#4b53bc">T</text></svg>
    <svg class="edge" width="30" height="30"><circle cx="15" cy="15" r="15" fill="url(#edge2)"/><path d="M1 10Q5 0 15 0Q30 1 30 14Q29 21 21 20Q17 19 19 17Q21 12 15 10Q7 7 1 10Z" fill="url(#edge1)"/><path d="M12 12Q7 18 12 24Q18 31 26 25Q20 27 16 22Q13 18 14 13Z" fill="#0b4fa3"/><path d="M15 12Q20 12 18.500 17Q18 20 22 20.500Q27 21 29 18Q28 23 26 24.500Q18 26 15 20Q13 16 15 12Z" fill="#eee"/></svg>
    <svg class="fold" width="30" height="28"><path d="M0 2Q0 1 1 1H9L13 4V8H0Z" fill="#e0a100"/><path d="M0 6H9L13 4H30V27H0Z" fill="url(#folder)"/><path d="M5 27V23Q5 20 8 20H22Q25 20 25 23V27Z" fill="#0a74cc"/><path d="M9 23.500H21" stroke="#064b8b"/></svg>
    <svg class="mail" width="38" height="36"><path d="M0 16L15 6L30 16V34H0Z" fill="#0f5fb5"/><path d="M3 15H28L15 26Z" fill="#f4f4f4"/><path d="M0 16L15 24L0 34Z" fill="#2aa8e6"/><path d="M30 15V34H0L16 24Z" fill="#3cc2f1"/><path d="M0 34L16 24L30 34Z" fill="#27a3e6"/><circle cx="26" cy="10" r="10" fill="#26808e"/><text x="26" y="15" text-anchor="middle" font-family="Noto Sans" font-size="14" fill="#fff">1</text></svg>
    <svg class="chrome" width="30" height="30"><circle cx="15" cy="15" r="15" fill="#fbc116"/><path d="M15 15L2 7.500A15 15 0 0 1 28 7.500H15Z" fill="#e33b2e"/><path d="M2 7.500A15 15 0 0 0 15 30L21.500 18.500L8.500 18.500Z" fill="#2ba24c"/><path d="M2 7.500L8.500 18.500L15 15V8Z" fill="#2ba24c"/><path d="M28 7.500H15L8 11L2 7.500A15 15 0 0 1 28 7.500Z" fill="#e33b2e"/><circle cx="15" cy="15" r="7.500" fill="#fff"/><circle cx="15" cy="15" r="6" fill="#3b78e7"/></svg>
    <svg class="google" width="30" height="30"><circle cx="15" cy="15" r="15" fill="#fff"/><g fill="none" stroke-width="4"><path d="M21.500 8A9 9 0 0 0 7.200 10.500" stroke="#e94235"/><path d="M7.200 10.500A9 9 0 0 0 7.200 19.500" stroke="#fabb05"/><path d="M7.200 19.500A9 9 0 0 0 21 21.500" stroke="#34a853"/><path d="M21 21.500A9 9 0 0 0 24 15H15" stroke="#4285f4"/></g></svg>
    <svg class="yt" width="30" height="20"><rect width="30" height="20" rx="4" fill="#f00"/><path d="M12 6L19 10.500L12 15Z" fill="#fff"/></svg>
    <div class="active"><svg width="30" height="30"><rect width="29" height="29" fill="#f8e0da"/><text x="4" y="25" font-family="Inter" font-weight="800" font-size="30" textLength="22" lengthAdjust="spacingAndGlyphs" fill="url(#red)">A</text></svg><i></i></div>
  </div>
  <div class="tray">
    <svg class="chev" width="14" height="9"><path d="M1 8L7 2L13 8" fill="none" stroke="#222" stroke-width="1.800"/></svg>
    <div class="lang">ENG<br>IN</div>
    <svg width="20" height="16"><path d="M.5 6Q10 -3 19.500 6M3.500 9Q10 2.500 16.500 9M6.500 12Q10 8.500 13.500 12" fill="none" stroke="#222" stroke-width="1.300"/><circle cx="10" cy="13.500" r="1.800" fill="#222"/></svg>
    <svg class="vol" width="20" height="16"><path d="M.7 5.500H4L8 1.500V14.500L4 10.500H.7Z" fill="none" stroke="#222" stroke-width="1.300"/><path d="M10.500 5Q12.500 8 10.500 11M13 3Q16.500 8 13 13" fill="none" stroke="#222" stroke-width="1.200"/><path d="M15.500 1Q21 8 15.500 15" fill="none" stroke="#bbb"/></svg>
    <svg class="bat" width="20" height="14"><rect x=".8" y="1.300" width="16" height="11.400" rx="2.500" fill="none" stroke="#222" stroke-width="1.500"/><path d="M3 4H6V10H3ZM17.500 5H20V9H17.500Z" fill="#222"/></svg>
    <div class="clock"><span>09:37 PM</span><span>08/04/2024</span></div>
    <svg class="bell" width="16" height="19"><path d="M0 15L1.500 13V6Q2 0 8 0Q14 0 14.500 6V13L16 15V16H0ZM5 17H11Q10 19 8 19Q6 19 5 17Z" fill="#174c58"/></svg>
    <svg class="copilot" width="32" height="32"><path d="M2 17Q3 4 8 2Q13 0 20 2Q16 4 14 12Q12 20 8 20Q2 20 2 17Z" fill="url(#cop1)"/><path d="M13 1H18Q22 2 24 8H19Q17 6 13 1Z" fill="#1849cf"/><path d="M20 8H27Q30 9 29 14Q27 22 22 22H12Q16 20 18 13Z" fill="url(#cop2)"/><rect x="8" y="20" width="23" height="9" rx="2" fill="#fdc503"/><text x="19.500" y="27.500" text-anchor="middle" font-family="Noto Sans" font-weight="800" font-size="8" textLength="17" fill="#222">PRE</text></svg>
  </div>
</footer>
</body>
</html>
```
FILE: styles.css
```css
* { box-sizing: border-box; }
body {
  margin: 0; width: 1920px; height: 1080px; overflow: hidden;
  display: flex; flex-direction: column;
  background: #222831; color: #f0f1f2;
  font: 14px/20px "Noto Sans", "Open Sans", sans-serif;
}
svg { display: block; flex: none; overflow: visible; }
p { margin: 0; }
.defs { position: absolute; }
.dn, .dnb { display: block; flex: none; width: 6px; height: 4px; background: #e0e0e0; clip-path: polygon(0 0, 100% 0, 50% 100%); }
.dnb { width: 10px; height: 5px; }
.dim { background: #7b7f86; }

/* title bar */
.titlebar { height: 34px; flex: none; display: flex; align-items: flex-start; white-space: nowrap; }
.qat { display: flex; width: 686px; height: 26px; align-items: center; }
.logo { margin-right: 1px; }
.cell { width: 30px; display: flex; justify-content: center; }
.cell.first { width: 26px; padding-right: 15px; }
.cell.half { width: 15px; }
.cell.slim { width: 20px; }
.cell.half .dn { margin-left: -1px; }
.share { color: #7cc4fa; margin-left: 1px; }
.apptitle { width: 517px; display: flex; gap: 18px; padding-top: 4px; color: #fff; letter-spacing: .08px; }
.search { display: flex; align-items: center; width: 242px; }
.kw { margin-left: 8px; width: 223px; height: 26px; line-height: 25px; background: #474f61; color: #b3b6bd; font-style: italic; padding-left: 3px; letter-spacing: -.2px; }
.account { display: flex; align-items: center; height: 26px; }
.user { margin-left: 9px; }
.signin { margin-left: 7px; width: 45px; }
.a1 { margin-left: 61px; }
.cart { margin-left: 15px; }
.tri { margin-left: 10px; }
.a2 { margin-left: 8px; }
.vsep { width: 1px; height: 22px; background: #4a5261; margin-left: 13px; }
.help { margin-left: 11px; width: 20px; height: 20px; border-radius: 10px; background: #d9d9d9; color: #33383f; text-align: center; font-size: 16px; }
.a3 { margin-left: 10px; }
.winbtns { margin: 6px 0 0 auto; width: 80px; }

/* ribbon tabs */
.tabs { height: 25px; flex: none; display: flex; padding-left: 3px; color: #b2b5b9; line-height: 25px; white-space: nowrap; align-items: center; }
.tab { flex: none; }
.tab.on { width: 64px; background: #3b4453; color: #f0f1f2; padding-left: 11px; }
.t2 { width: 61px; margin-left: 12px; letter-spacing: -.1px; } .t3 { width: 86px; } .t4 { width: 94px; letter-spacing: -.1px; } .t5 { width: 56px; }
.t6 { width: 78px; } .t7 { width: 70px; } .t8 { width: 77px; } .t9 { width: 102px; } .t10 { width: 112px; } .t11 { width: 133px; }

/* ribbon */
.ribbon { height: 124px; flex: none; background: #3b4453; display: grid; grid-template-columns: 278px 336px 184px 341px 100px 277px 86px 120px 99px 99px; }
.panel { display: flex; flex-direction: column; border-right: 1px solid #222831; }
.panel:last-child { border: 0; }
.body { height: 101px; padding-top: 5px; display: flex; }
.ptitle { display: flex; justify-content: center; align-items: center; gap: 9px; height: 24px; }
.big { display: flex; flex-direction: column; align-items: center; text-align: center; padding-top: 3px; }
.big svg { height: 40px; }
.big span { margin-top: 5px; white-space: nowrap; }
.big .dn { margin-top: 4px; }
.big.up span { margin-top: 4px; }
.big.up svg { margin-top: -2px; height: 41px; }
.big.up .dn { margin-top: 3px; }
.big.low span { margin-top: 7px; }
.col > div { height: 31px; display: flex; align-items: center; gap: 7px; white-space: nowrap; }
.draw { display: grid; grid-template-columns: 54px 53px 68px 46px 57px; }
.draw .big:nth-child(-n+2) span { margin-left: -2px; }
.draw .col { padding-left: 7px; }
.draw .col > div, .annotation .col > div, .block .col > div { gap: 10px; }
.modify { display: grid; grid-template-columns: 91px 87px 116px 20px; padding-left: 7px; }
.m1 { margin-left: 8px; } .m2 { margin-left: 4px; } .m3 { margin-left: 3px; }
.annotation { display: grid; grid-template-columns: 58px 81px 45px; }
.annotation .big:nth-child(2) { padding-right: 8px; }
.layers { display: grid; grid-template-columns: 77px 261px; }
.irow { display: flex; gap: 10px; padding-left: 4px; height: 31px; align-items: center; }
.combo { height: 28px; background: #4d596c; border: 1px solid #29303b; display: flex; align-items: center; }
.combo .dnb { margin-left: auto; margin-right: 2px; }
.lcombo { margin: 1px 0 2px; padding-left: 0; }
.lcombo .dnb { margin-right: 1px; }
.lcombo span { margin-left: 2px; }
.lt { padding-right: 3px; }
.block { display: grid; grid-template-columns: 51px 49px; }
.block .big { padding-left: 1px; }
.block .col { padding-left: 4px; }
.props { display: grid; grid-template-columns: 77px 25px 171px; }
.props .col { padding-left: 2px; }
.combos { display: flex; flex-direction: column; gap: 2px; padding-top: 2px; }
.combos span { padding-top: 1px; }
.swatch { width: 20px; height: 20px; background: #fff; border: 1px solid #bbb; margin: 0 13px 0 14px; }
.ln { width: 80px; height: 1px; background: #fff; margin: 0 2px 0 4px; }
.launch { margin-left: 80px; }
.pt { justify-content: flex-start; padding-left: 88px; }
.groups { display: grid; grid-template-columns: 51px 30px; }
.groups .col > div { padding-left: 5px; width: 30px; }
.groups .col > .hl { background: #42607f; border: 1px solid #6fc0fc; height: 28px; padding-left: 5px; }
.gt { gap: 7px; padding-right: 1px; }
.utils { display: grid; grid-template-columns: 86px 34px; }
.utils .col { padding-left: 4px; }
.clip { display: grid; grid-template-columns: 66px 33px; }
.clip .col { padding-left: 3px; }
.view { justify-content: center; padding-right: 22px; }
.vt { justify-content: flex-start; padding-left: 6px; }
.vt .launch { margin-left: 0; }

/* document tabs */
.doctabs { height: 37px; flex: none; padding: 5px 0 0 10px; border-bottom: 5px solid #3b4453; display: flex; }
.dtab { height: 27px; line-height: 29px; }
.start.dtab { width: 172px; background: #303846; color: #b2b5b9; padding-left: 29px; clip-path: path('M5 27Q15 24 18 12Q21 0 28 0H163Q172 2 172 12Q168 27 156 27Z'); }
.current { width: 190px; margin-left: -17px; background: #3b4453; color: #fff; font-weight: 700; padding-left: 28px; letter-spacing: 0; display: flex; align-items: center; clip-path: path('M0 27Q12 25 15 12Q18 0 26 0H155Q166 0 168 10Q172 25 183 27Z'); }
.current svg { margin: 0 37px 0 auto; }
.dplus { width: 26px; height: 18px; margin: 5px 0 0 -12px; background: #303846; border-radius: 2px 14px 2px 14px; display: flex; align-items: center; justify-content: center; }

/* canvas */
.canvas { height: 741px; flex: none; position: relative; background: #212830; overflow: hidden; }
.drawing { position: absolute; inset: 0; }
.ucs { font: 300 21px "Open Sans", sans-serif; fill: #fff; }
.compass { font: 700 22px "Liberation Sans", sans-serif; fill: #aeb0b3; text-anchor: middle; }
.top { font: 700 14px "Open Sans", sans-serif; fill: #4a505a; text-anchor: middle; }
.wcs { font: 13px "Liberation Sans", sans-serif; fill: #4a4a55; }
.viewlabel { position: absolute; left: 2px; top: 6px; letter-spacing: .24px; }
.cmd { position: absolute; left: 386px; top: 707px; display: flex; width: 1147px; height: 34px; }
.cmdtools { width: 70px; background: #282f3b; border-radius: 3px; }
.cmdline { width: 1077px; height: 32px; margin-top: 1px; background: #bcbdbf; border-radius: 2px; display: flex; align-items: center; font: italic 14px "DejaVu Sans Mono", monospace; color: #5c5e61; letter-spacing: .55px; }
.cmdline span { margin: -1px 0 0 4px; }
.cmdline .up { width: 10px; height: 5px; margin: 2px 6px 0 auto; background: #555; clip-path: polygon(0 100%, 100% 100%, 50% 0); }

/* layout tabs */
.layouts { height: 27px; flex: none; border-top: 1px solid #3f4754; display: flex; padding-left: 14px; }
.ltab { height: 22px; line-height: 22px; background: #2f3744; color: #b2b5b9; text-align: center; margin-left: -2px; letter-spacing: -.1px; }
.ltab.m { width: 74px; background: #3b4453; color: #fff; font-weight: 700; margin: 0; padding-right: 2px; clip-path: path('M-4 0H74Q71 4 69 14Q67 22 62 22H9Q4 22 2 14Q0 4 -4 0Z'); }
.l1 { width: 82px; clip-path: path('M0 0H82Q80 4 78 14Q76 22 71 22H8Q4 22 3 14Z'); }
.l2 { width: 88px; clip-path: path('M0 0H88Q83 4 80 14Q78 22 73 22H8Q4 22 3 14Z'); padding-right: 5px; }
.lplus { width: 27px; height: 19px; margin: 1px 0; background: #2f3744; border-radius: 14px 2px 14px 2px; display: flex; align-items: center; justify-content: center; }

/* status bar */
.status { height: 32px; flex: none; display: flex; justify-content: flex-end; padding-right: 1px; }
.sg { height: 30px; background: #3b4453; display: flex; align-items: center; color: #d9d9d9; }
.sg b { width: 29px; height: 28px; display: flex; align-items: center; justify-content: center; font-weight: 400; flex: none; }
.sg b.on { background: #6190c2; }
.sg b.w { color: #fff; }
.model { width: 59px; justify-content: center; color: #f4f4f4; margin-right: 3px; }
.g2 { width: 80px; margin-right: 3px; } .g2 .dnb { margin-left: 7px; }
.g3 { width: 130px; margin-right: 1px; } .g3 .dnb { margin-left: 7px; } .g3 .iso { margin-left: 5px; } .g3 .iso + .dnb { margin-left: 6px; }
.g4 { width: 80px; margin-right: 3px; } .n2 { margin-left: 1px; } .g4 .dnb { margin-left: 6px; }
.g5 { width: 132px; margin-right: 3px; } .g5 b + b { margin-left: 1px; } .g5 span { margin-left: 6px; width: 18px; color: #f4f4f4; letter-spacing: -.8px; } .g5 .dnb { margin-left: 4px; }
.g6 { width: 50px; margin-right: 1px; } .g6 .dnb { margin-left: 6px; }
.g7 { width: 30px; margin-right: 3px; justify-content: center; }
.g8 { width: 30px; margin-right: 3px; justify-content: center; }
.g9 { width: 4px; margin-right: 3px; }
.g10 { width: 60px; justify-content: space-between; padding: 0 5px; }

/* taskbar */
.taskbar { height: 60px; flex: none; background: #eee; box-shadow: 0 -1px #b9babd; color: #1c1c1c; display: flex; align-items: center; }
.weather { width: 557px; display: flex; padding-left: 25px; gap: 3px; height: 46px; }
.weather div { padding-top: 3px; }
.weather .grey { color: #5d5d5d; letter-spacing: .15px; }
.weather p { white-space: nowrap; }
.apps { display: flex; align-items: center; width: 1000px; height: 60px; }
.tsearch { width: 275px; height: 40px; margin-left: 16px; background: #fafafa; border: 1px solid #d8d8d8; border-bottom-color: #c4c4c4; border-radius: 20px; display: flex; align-items: center; padding-left: 14px; font-size: 16px; color: #5b5b5b; }
.tsearch span { margin-left: 11px; letter-spacing: -.1px; }
.hippo { margin: 2px 6px 0 auto; }
.tv { margin-left: 15px; } .teams { margin-left: 26px; } .edge { margin-left: 25px; } .fold { margin-left: 25px; }
.mail { margin: -6px 0 0 25px; } .chrome { margin-left: 17px; } .google { margin-left: 25px; } .yt { margin-left: 25px; }
.active { width: 48px; height: 49px; margin-left: 16px; background: #f8f8f8; border: 1px solid #e2e2e2; border-radius: 5px; display: flex; flex-direction: column; align-items: center; padding-top: 9px; }
.active i { width: 20px; height: 4px; border-radius: 2px; background: #26808e; margin-top: 5px; }
.tray { display: flex; align-items: center; width: 374px; margin-left: -11px; flex: none; }
.lang { width: 40px; text-align: center; margin: 0 17px 0 21px; }
.vol { margin-left: 10px; } .bat { margin-left: 10px; }
.clock { width: 98px; display: flex; flex-direction: column; align-items: flex-end; white-space: nowrap; letter-spacing: .15px; }
.bell { margin-left: 11px; } .copilot { margin-left: 21px; }
```
